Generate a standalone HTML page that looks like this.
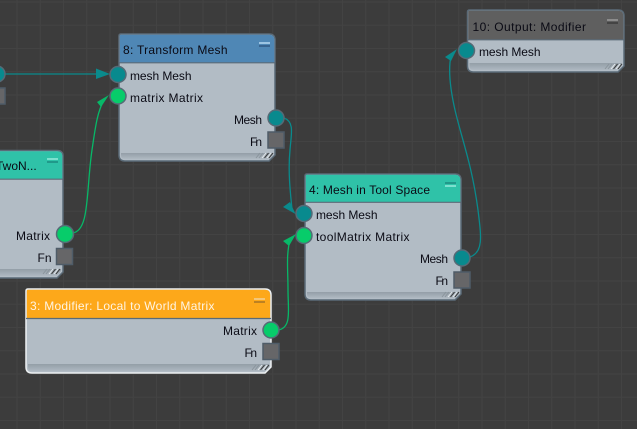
<!DOCTYPE html>
<html><head><meta charset="utf-8"><style>
html,body{margin:0;padding:0;background:#3c3c3c;width:637px;height:429px;overflow:hidden}
svg{display:block}
text{font-family:"Liberation Sans",sans-serif;font-size:12px;fill:#0a0a14}
.bd{fill:#b2bcc5;stroke:#5b6b78;stroke-width:1.5}
.ft{fill:url(#fg)}
.pt{fill:#088a8e;stroke:#566a76;stroke-width:1.5}
.pm{fill:#07cc6a;stroke:#566a76;stroke-width:1.5}
.fn{fill:#666668;stroke:#4f5c68;stroke-width:1.5}
.wt{fill:none;stroke:#0a8a8c;stroke-width:1.3}
.wm{fill:none;stroke:#07b868;stroke-width:1.3}
</style></head><body>
<svg width="637" height="429" viewBox="0 0 637 429" xmlns="http://www.w3.org/2000/svg">
<defs>
<linearGradient id="fg" x1="0" y1="0" x2="0" y2="1">
<stop offset="0" stop-color="#939ea7"/><stop offset="1" stop-color="#aeb8c1"/>
</linearGradient>
<pattern id="g" x="16.5" y="1.5" width="23.25" height="23.25" patternUnits="userSpaceOnUse">
<path d="M0.5 0V23.25M0 0.5H23.25" stroke="#434343" stroke-width="1" fill="none"/>
</pattern>
<g id="grip" fill="none" stroke-width="1">
<path d="M-16 5l4-5" stroke="#8a949c"/><path d="M-13 5l4-5" stroke="#8a949c"/><path d="M-10 5l4-5" stroke="#e8ecef"/><path d="M-7.500 5l4-5" stroke="#333"/><path d="M-5 5l4-5" stroke="#e8ecef"/><path d="M-3 5l4-5" stroke="#333"/>
</g>
</defs>
<rect width="637" height="429" fill="#3c3c3c"/>
<rect width="637" height="429" fill="url(#g)"/>

<!-- wires -->
<path class="wt" d="M0 74H100"/>
<path d="M96 68.500L110 74L96 79Z" fill="#0a8a8c"/>
<path class="wm" d="M72 233C90 232 86 190 92 150C95 130 97 112 104 100"/>
<path d="M97 102L109 95L101 107Z" fill="#07b868"/>
<path class="wt" d="M284 118C295 122 291 135 290 150C288 170 290 190 292 209"/>
<path d="M283 207L290 202L295.500 214Z" fill="#0a8a8c"/>
<path class="wm" d="M278 330C292 328 288 310 288 290C288 270 286 255 290 240"/>
<path d="M283 241L296 234L289 246Z" fill="#07b868"/>
<path class="wt" d="M470 257C484 252 481 235 478 210C472 165 462 140 455 110C450 88 448 70 451 56"/>
<path d="M445 57L457 49L451 61Z" fill="#0a8a8c"/>

<!-- partial top-left items -->
<circle class="pt" cx="-3" cy="74" r="8"/>
<rect class="fn" x="-10" y="88" width="15" height="16"/>

<!-- Left node -->
<path class="bd" d="M-5 150.500H57Q63 150.500 63 156V272L57 278H-5Z"/>
<path d="M-5 151.200H57Q62.300 151.200 62.300 156V179H-5Z" fill="#2fc2a8"/>
<path d="M-5 179.200H63" stroke="#5b6b78" stroke-width="1.200"/>
<rect x="47" y="158" width="11" height="2" fill="#7de0cf"/><rect x="47" y="161" width="11" height="2" fill="#20998a"/>
<path class="ft" d="M-5 269H61V271L57 276H-5Z"/>
<use href="#grip" x="59" y="269"/>
<text x="-4" y="170">TwoN...</text>
<text x="16" y="240" textLength="34">Matrix</text>
<text x="37.500" y="262">Fn</text>
<circle class="pm" cx="65" cy="234" r="8.500"/>
<rect class="fn" x="56.500" y="248.500" width="16" height="16"/>

<!-- Node 8 -->
<path class="bd" d="M119 36Q119 34 121 34H269Q275 34 275 40V155L269 161H125Q119 161 119 155Z"/>
<path d="M119.800 36Q119.800 34.700 121 34.700H269Q274.300 34.700 274.300 40V62.500H119.800Z" fill="#4f87b5"/>
<path d="M119 62.800H275" stroke="#5b6b78" stroke-width="1.200"/>
<rect x="259" y="42" width="11" height="2" fill="#9cc4e2"/><rect x="259" y="45" width="11" height="2" fill="#38648f"/>
<path class="ft" d="M121 153H273V155L269 159H125Q121 159 121 155Z"/>
<use href="#grip" x="272" y="153"/>
<text x="123" y="54" textLength="104.500">8: Transform Mesh</text>
<text x="130" y="80" textLength="61.500">mesh Mesh</text>
<text x="130" y="102" textLength="73">matrix Matrix</text>
<text x="234" y="124" textLength="28">Mesh</text>
<text x="250" y="146" textLength="12">Fn</text>
<circle class="pt" cx="118" cy="74.500" r="8"/>
<circle class="pm" cx="118" cy="96" r="8"/>
<circle class="pt" cx="276" cy="118" r="8"/>
<rect class="fn" x="268" y="132" width="16" height="16"/>

<!-- Node 3 -->
<path d="M26 291Q26 289 28 289H265Q271 289 271 295V367L265 373H32Q26 373 26 367Z" fill="#b2bcc5" stroke="#eef1f3" stroke-width="1.500"/>
<path d="M26.800 291Q26.800 289.800 28 289.800H265Q270.200 289.800 270.200 295V318H26.800Z" fill="#fda81a"/>
<path d="M26 318.500H271" stroke="#5b6b78" stroke-width="1.200"/>
<rect x="254" y="298" width="11" height="2" fill="#f5c778"/><rect x="254" y="301" width="11" height="2" fill="#bd8122"/>
<path class="ft" d="M28 364H269V367L265 371H32Q28 371 28 367Z"/>
<use href="#grip" x="268" y="365"/>
<text x="30" y="310" textLength="184.500" style="fill:#fff4e2">3: Modifier: Local to World Matrix</text>
<text x="223" y="335" textLength="34">Matrix</text>
<text x="244.500" y="357" textLength="12.500">Fn</text>
<circle class="pm" cx="271" cy="330" r="8"/>
<rect class="fn" x="263" y="343.500" width="16" height="16"/>

<!-- Node 4 -->
<path class="bd" d="M305 176Q305 174 307 174H455Q461 174 461 180V294L455 300H311Q305 300 305 294Z"/>
<path d="M305.800 176Q305.800 174.700 307 174.700H455Q460.300 174.700 460.300 180V202H305.800Z" fill="#2fc2a8"/>
<path d="M305 202.300H461" stroke="#5b6b78" stroke-width="1.200"/>
<rect x="445" y="182" width="11" height="2" fill="#20998a"/><rect x="445" y="185" width="11" height="2" fill="#7de0cf"/>
<path class="ft" d="M307 292H459V294L455 298H311Q307 298 307 294Z"/>
<use href="#grip" x="458" y="292"/>
<text x="309" y="194" textLength="121">4: Mesh in Tool Space</text>
<text x="316" y="219" textLength="61.500">mesh Mesh</text>
<text x="316" y="241" textLength="93.500">toolMatrix Matrix</text>
<text x="420" y="263" textLength="28">Mesh</text>
<text x="435.500" y="285" textLength="12.500">Fn</text>
<circle class="pt" cx="304" cy="213.500" r="8"/>
<circle class="pm" cx="304" cy="235.500" r="8"/>
<circle class="pt" cx="462" cy="258" r="8"/>
<rect class="fn" x="454" y="272" width="16" height="16"/>

<!-- Node 10 -->
<path class="bd" d="M467.500 12Q467.500 10 469.500 10H618Q624 10 624 16V66L618 72H473.500Q467.500 72 467.500 66Z"/>
<path d="M468.300 12Q468.300 10.700 469.500 10.700H618Q623.300 10.700 623.300 16V39.500H468.300Z" fill="#5f5f5f"/>
<path d="M467.500 39.800H624" stroke="#5b6b78" stroke-width="1.200"/>
<rect x="607" y="19" width="11" height="2" fill="#8c8c8c"/><rect x="607" y="22" width="11" height="2" fill="#444"/>
<path class="ft" d="M469.500 63H622V65L618 70H473.500Q469.500 70 469.500 66Z"/>
<use href="#grip" x="621" y="64"/>
<text x="472.500" y="31" textLength="113.500">10: Output: Modifier</text>
<text x="479" y="56" textLength="61.500">mesh Mesh</text>
<circle class="pt" cx="466.500" cy="50.500" r="8"/>
</svg>
</body></html>
